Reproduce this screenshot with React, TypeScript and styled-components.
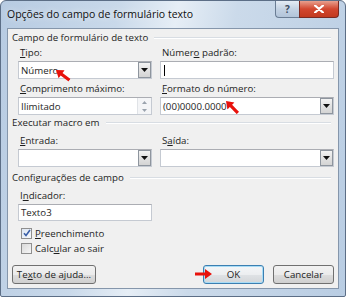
import React, { FC, ReactNode } from 'react'
import styled, { createGlobalStyle, css } from 'styled-components'

const GlobalStyle = createGlobalStyle`
  html, body {
    margin: 0;
    padding: 0;
    background: #ffffff;
  }
  body {
    font-family: 'Open Sans', 'Noto Sans', sans-serif;
    font-size: 9.7px;
    color: #1e1e1e;
  }
`

interface FieldProps {
  label: ReactNode
  children: ReactNode
}

const Field: FC<FieldProps> = ({ label, children }) => (
  <FieldBox>
    <FieldLabel>{label}</FieldLabel>
    {children}
  </FieldBox>
)

const DropButton: FC = () => (
  <DropBtn>
    <svg width="7" height="4" viewBox="0 0 7 4">
      <path d="M0 0h7L3.5 4z" fill="#111" />
    </svg>
  </DropBtn>
)

const Select: FC<{ value?: string }> = ({ value }) => (
  <InputBox>
    <InputText>{value}</InputText>
    <DropButton />
  </InputBox>
)

const Spinner: FC<{ value: string }> = ({ value }) => (
  <InputBox>
    <InputText>{value}</InputText>
    <SpinCol>
      <SpinPart>
        <svg width="5" height="3" viewBox="0 0 5 3">
          <path d="M0 3h5L2.5 0z" fill="#9aa3ad" />
        </svg>
      </SpinPart>
      <SpinPart>
        <svg width="5" height="3" viewBox="0 0 5 3">
          <path d="M0 0h5L2.5 3z" fill="#9aa3ad" />
        </svg>
      </SpinPart>
    </SpinCol>
  </InputBox>
)

// tip of the arrow sits at (left, top + 5)
const Arrow: FC<{ top: number; left: number; rotate: number }> = ({
  top,
  left,
  rotate,
}) => (
  <ArrowMark style={{ top, left, transform: `rotate(${rotate}deg)` }}>
    <svg width="17" height="10" viewBox="0 0 17 10">
      <path d="M17 3.4H7V0L0 5l7 5V6.6h10z" fill="#e8120c" />
    </svg>
  </ArrowMark>
)

const App: FC = () => (
  <>
    <GlobalStyle />
    <Window>
      <TitleBar>
        <Title>Opções do campo de formulário texto</Title>
        <Caption>
          <HelpBtn>?</HelpBtn>
          <CloseBtn>
            <svg width="10" height="8" viewBox="0 0 10 8">
              <path
                d="M1 0.5l8 7M9 0.5l-8 7"
                stroke="#fff"
                strokeWidth="2.2"
                strokeLinecap="round"
              />
            </svg>
          </CloseBtn>
        </Caption>
      </TitleBar>

      <Client>
        <Group $top={1}>
          <GroupTitle>Campo de formulário de texto</GroupTitle>
          <Grid $top={0}>
            <Field label={<><u>T</u>ipo:</>}>
              <Select value="Número" />
            </Field>
            <Field label={<>Númer<u>o</u> padrão:</>}>
              <InputBox>
                <InputText>
                  <Caret />
                </InputText>
              </InputBox>
            </Field>
            <Field label={<><u>C</u>omprimento máximo:</>}>
              <Spinner value="Ilimitado" />
            </Field>
            <Field label={<><u>F</u>ormato do número:</>}>
              <Select value="(00)0000.0000" />
            </Field>
          </Grid>
        </Group>

        <Group $top={0}>
          <GroupTitle>Executar macro em</GroupTitle>
          <Grid $top={3}>
            <Field label={<><u>E</u>ntrada:</>}>
              <Select />
            </Field>
            <Field label={<>S<u>a</u>ída:</>}>
              <Select />
            </Field>
          </Grid>
        </Group>

        <Group $top={3}>
          <GroupTitle>Configurações de campo</GroupTitle>
          <Grid $top={3}>
            <Field label={<>I<u>n</u>dicador:</>}>
              <InputBox $short>
                <InputText>Texto3</InputText>
              </InputBox>
            </Field>
          </Grid>
          <Checks>
            <CheckRow>
              <CheckBox $checked>
                <svg width="8" height="8" viewBox="0 0 8 8">
                  <path
                    d="M1 4.2l2 2.3L7 1"
                    stroke="#3a5fa8"
                    strokeWidth="1.6"
                    fill="none"
                  />
                </svg>
              </CheckBox>
              <span>
                <u>P</u>reenchimento
              </span>
            </CheckRow>
            <CheckRow>
              <CheckBox />
              <span>
                Calc<u>u</u>lar ao sair
              </span>
            </CheckRow>
          </Checks>
        </Group>

        <Footer>
          <Button $wide>
            Te<u>x</u>to de ajuda...
          </Button>
          <Spacer />
          <Button $focused>OK</Button>
          <Button>Cancelar</Button>
        </Footer>
      </Client>

      <Arrow top={64} left={55} rotate={37} />
      <Arrow top={95} left={225} rotate={45} />
      <Arrow top={268} left={211} rotate={180} />
    </Window>
  </>
)

const Window = styled.div`
  position: relative;
  width: 346px;
  height: 297px;
  box-sizing: border-box;
  display: flex;
  flex-direction: column;
  padding: 0 6px 7px 6px;
  border: 1px solid #5c6e86;
  border-radius: 6px 6px 2px 2px;
  background: linear-gradient(
    100deg,
    #b7cbe2 0%,
    #c9d9ea 30%,
    #e6eef6 45%,
    #cbdaea 60%,
    #b9cde3 100%
  );
  overflow: hidden;
`

const TitleBar = styled.div`
  height: 27px;
  display: flex;
  align-items: flex-start;
  justify-content: space-between;
`

const Title = styled.div`
  margin-top: 6px;
  font-size: 10.5px;
  color: #101010;
  text-shadow: 0 0 6px rgba(255, 255, 255, 0.9);
`

const Caption = styled.div`
  display: flex;
`

const captionBtn = css`
  height: 17px;
  display: flex;
  align-items: center;
  justify-content: center;
  border: 1px solid #6a7d94;
  border-top: none;
  box-sizing: border-box;
`

const HelpBtn = styled.div`
  ${captionBtn};
  width: 24px;
  border-radius: 0 0 0 4px;
  border-right: none;
  background: linear-gradient(#e4ecf5, #c3d2e3 50%, #b2c4d9);
  color: #3b4b5e;
  font-weight: bold;
  font-size: 10px;
`

const CloseBtn = styled.div`
  ${captionBtn};
  width: 40px;
  border-radius: 0 0 4px 0;
  border-color: #7a2a22;
  background: linear-gradient(#e8a08e, #d2472f 50%, #c23a20);
`

const Client = styled.div`
  flex: 1;
  display: flex;
  flex-direction: column;
  background: #f0f0f0;
  border: 1px solid #8596ab;
  padding: 0 4px 0 4px;
`

const Group = styled.div<{ $top: number }>`
  display: flex;
  flex-direction: column;
  margin-top: ${({ $top }) => $top}px;
`

const GroupTitle = styled.div`
  display: flex;
  align-items: center;
  gap: 6px;
  height: 14px;
  white-space: nowrap;

  &::after {
    content: '';
    flex: 1;
    height: 1px;
    background: #d8dde3;
    margin-right: 3px;
    box-shadow: 0 1px 0 #fff;
  }
`

const Grid = styled.div<{ $top: number }>`
  display: grid;
  grid-template-columns: 134px 174px;
  column-gap: 8px;
  row-gap: 1px;
  padding-left: 6px;
  padding-top: ${({ $top }) => $top}px;
`

const FieldBox = styled.div`
  display: flex;
  flex-direction: column;
`

const FieldLabel = styled.div`
  height: 16px;
  line-height: 16px;
  padding-left: 2px;
  margin-top: 1px;
`

const InputBox = styled.div<{ $short?: boolean }>`
  display: flex;
  align-items: stretch;
  height: ${({ $short }) => ($short ? '17px' : '18px')};
  box-sizing: border-box;
  background: #fff;
  border: 1px solid #c5cad2;
  border-top-color: #abadb3;
`

const InputText = styled.div`
  flex: 1;
  display: flex;
  align-items: center;
  padding-left: 2px;
  white-space: nowrap;
  overflow: hidden;
`

const Caret = styled.span`
  display: inline-block;
  width: 1px;
  height: 11px;
  background: #000;
  margin-left: 1px;
`

const DropBtn = styled.div`
  width: 13px;
  display: flex;
  align-items: center;
  justify-content: center;
  box-sizing: border-box;
  border: 1px solid #8e959e;
  background: linear-gradient(#f3f3f3, #e2e2e2 50%, #d4d4d4);
`

const SpinCol = styled.div`
  width: 13px;
  display: flex;
  flex-direction: column;
  border-left: 1px solid #e0e3e7;
`

const SpinPart = styled.div`
  flex: 1;
  display: flex;
  align-items: center;
  justify-content: center;
  background: #f4f5f7;
`

const Checks = styled.div`
  display: flex;
  flex-direction: column;
  gap: 1px;
  padding: 5px 0 0 9px;
`

const CheckRow = styled.div`
  display: flex;
  align-items: center;
  gap: 3px;
  height: 14px;
`

const CheckBox = styled.div<{ $checked?: boolean }>`
  width: 11px;
  height: 11px;
  box-sizing: border-box;
  border: 1px solid #8f8f8f;
  display: flex;
  align-items: center;
  justify-content: center;
  background: ${({ $checked }) =>
    $checked
      ? 'linear-gradient(135deg, #dde6f2, #f7f9fc)'
      : 'linear-gradient(135deg, #d9d9d9, #f6f6f6)'};
`

const Footer = styled.div`
  display: flex;
  align-items: center;
  gap: 9px;
  margin-top: auto;
  margin-bottom: 4px;
`

const Spacer = styled.div`
  flex: 1;
`

const Button = styled.div<{ $wide?: boolean; $focused?: boolean }>`
  width: ${({ $wide }) => ($wide ? '84px' : '61px')};
  height: 19px;
  box-sizing: border-box;
  display: flex;
  align-items: center;
  justify-content: center;
  border: 1px solid #707070;
  border-radius: 3px;
  background: linear-gradient(#f2f2f2, #ebebeb 50%, #dddddd 51%, #cfcfcf);
  white-space: nowrap;
  ${({ $focused }) =>
    $focused &&
    css`
      border-color: #3c7fb1;
      box-shadow: inset 0 0 0 1px #a8dcf6;
      background: linear-gradient(#f4f6f8, #eceef0 50%, #dfe2e5 51%, #d3d6d9);
    `}
`

const ArrowMark = styled.div`
  position: absolute;
  width: 17px;
  height: 10px;
  display: flex;
  transform-origin: 0 50%;
`

export default App
